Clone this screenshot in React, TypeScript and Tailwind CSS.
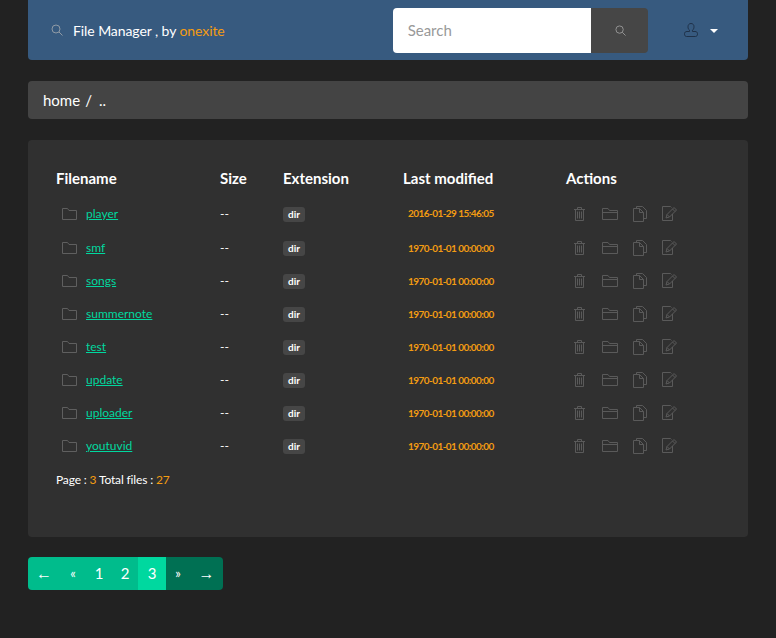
import React from "react";

const files = [
  { name: "player", modified: "2016-01-29 15:46:05" },
  { name: "smf", modified: "1970-01-01 00:00:00" },
  { name: "songs", modified: "1970-01-01 00:00:00" },
  { name: "summernote", modified: "1970-01-01 00:00:00" },
  { name: "test", modified: "1970-01-01 00:00:00" },
  { name: "update", modified: "1970-01-01 00:00:00" },
  { name: "uploader", modified: "1970-01-01 00:00:00" },
  { name: "youtuvid", modified: "1970-01-01 00:00:00" },
];

const columns = "grid grid-cols-[164px_63px_120px_163px_1fr]";

function Magnifier({ className }: { className: string }) {
  return (
    <svg viewBox="0 0 12 12" fill="none" stroke="currentColor" strokeWidth="1" className={className}>
      <circle cx="5" cy="5" r="4" />
      <path d="M8 8l3.5 3.5" />
    </svg>
  );
}

function FolderIcon({ className }: { className: string }) {
  return (
    <svg viewBox="0 0 15 12" fill="none" stroke="currentColor" strokeWidth="1" className={className}>
      <path d="M.5 11.500V.5h5l1.500 2h7.500v9z" />
    </svg>
  );
}

function ActionFolder() {
  return (
    <svg viewBox="0 0 16 12" fill="none" stroke="currentColor" strokeWidth="1" className="w-4 h-3">
      <path d="M.5 11.5V.5h5.5l1.5 2h8v9z" />
      <path d="M.5 4.5h15" />
    </svg>
  );
}

function TrashIcon() {
  return (
    <svg viewBox="0 0 11 14" fill="none" stroke="currentColor" strokeWidth="1" className="w-[11px] h-[14px]">
      <path d="M0 2.5h11M3.5 2.5v-2h4v2M1.5 2.5v11h8v-11M3.500 4.5v7M5.500 4.5v7M7.500 4.5v7" />
    </svg>
  );
}

function CopyIcon() {
  return (
    <svg viewBox="0 0 14 16" fill="none" stroke="currentColor" strokeWidth="1" className="w-[14px] h-4">
      <path d="M3.5 2.5V.5h6l4 4v8h-3" />
      <path d="M.5 2.5h6l4 4v9h-10z" />
      <path d="M6.5 2.5v4h4" />
    </svg>
  );
}

function EditIcon() {
  return (
    <svg viewBox="0 0 15 15" fill="none" stroke="currentColor" strokeWidth="1" className="w-[15px] h-[15px]">
      <path d="M10.5 8v6.500h-10V.5h8l1 1" />
      <path d="M4 12l1-3.500 7-7 2.500 2.500-7 7z" />
      <path d="M5 8.500l2.500 2.500M10.500 3l2.500 2.500" />
    </svg>
  );
}

function UserIcon() {
  return (
    <svg viewBox="0 0 14 14" fill="none" stroke="currentColor" strokeWidth="1" className="w-[14px] h-[14px]">
      <path d="M7 .5c-2 0-3 1.500-3 3.300 0 1.500.6 2.700 1.500 3.400v1.300H3c-1.500 0-2.500.8-2.500 2.200v.5c0 1.300.8 2.300 2 2.300h9c1.200 0 2-1 2-2.300v-.5c0-1.400-1-2.200-2.500-2.200H8.500V7.200C9.400 6.500 10 5.300 10 3.800 10 2 9 .5 7 .5z" />
    </svg>
  );
}

function Row({ name, modified }: { name: string; modified: string }) {
  return (
    <div className={`${columns} group h-[33px] items-center text-[12px] first:h-[34px] first:pb-[1px]`}>
      <div className="flex items-center pl-[6px]">
        <FolderIcon className="w-[15px] h-[12px] text-[#5f5f5f]" />
        <a className="ml-[9px] text-[#00d89f] underline">{name}</a>
      </div>
      <div className="text-white">--</div>
      <div className="mt-[1px] flex">
        <span className="rounded-[3px] bg-[#464646] px-[5px] text-[10px] leading-[15px] font-bold text-white">dir</span>
      </div>
      <div className="mt-[2px] pl-[5px] text-[10px] font-bold tracking-[-0.55px] text-[#f39c12] group-first:mt-0">{modified}</div>
      <div className="flex items-center text-[#5a5a5a]">
        <div className="w-[8px]" />
        <div className="flex w-[28px] items-center"><TrashIcon /></div>
        <div className="flex w-[31px] items-center"><ActionFolder /></div>
        <div className="flex w-[29px] items-center"><CopyIcon /></div>
        <EditIcon />
      </div>
    </div>
  );
}

function PageLink({ children, className }: { children: React.ReactNode; className: string }) {
  return <span className={`flex h-[33px] items-center justify-center text-white ${className}`}>{children}</span>;
}

export default function App() {
  return (
    <div className="min-h-[638px] bg-[#222222] px-[28px] text-white font-['Lato','Liberation_Sans',sans-serif]">
      {/* Navbar */}
      <div className="flex h-[60px] items-center rounded-b-[4px] bg-[#375a7f] pl-[23px]">
        <Magnifier className="w-[12px] h-[12px] text-[#8f9aa5]" />
        <div className="ml-[10px] text-[14px] tracking-[-0.08px]">
          File Manager , by <span className="text-[#f39c12]">onexite</span>
        </div>
        <div className="ml-[168px] flex h-[45px] w-[255px] overflow-hidden rounded-[4px]">
          <div className="flex w-[198px] items-center bg-white pl-[15px] text-[15px] text-[#999999]">Search</div>
          <div className="flex flex-1 items-center justify-center bg-[#464646] pl-[3px]">
            <Magnifier className="w-[11px] h-[11px] text-[#999999]" />
          </div>
        </div>
        <div className="ml-[36px] text-[#1f3148]"><UserIcon /></div>
        <div className="ml-[12px] mt-[2px] h-0 w-0 border-x-4 border-t-4 border-x-transparent border-t-white" />
      </div>

      {/* Breadcrumb */}
      <div className="mt-[21px] flex h-[38px] items-center rounded-[4px] bg-[#444444] pl-[15px] text-[15px]">
        home <span className="mx-[5px]">/</span> <span className="ml-[2px]">..</span>
      </div>

      {/* File list */}
      <div className="mt-[21px] h-[397px] rounded-[4px] bg-[#303030] pl-[28px] pt-[26px]">
        <div className={`${columns} h-[24px] items-center text-[15px] font-bold`}>
          <div>Filename</div>
          <div>Size</div>
          <div>Extension</div>
          <div>Last modified</div>
          <div>Actions</div>
        </div>
        <div className="mt-[7px]">
          {files.map((f) => (
            <Row key={f.name} name={f.name} modified={f.modified} />
          ))}
        </div>
        <div className="mt-[9px] text-[12px] tracking-[-0.15px]">
          Page : <span className="text-[#f39c12]">3</span> Total files : <span className="text-[#f39c12]">27</span>
        </div>
      </div>

      {/* Pagination */}
      <div className="mt-[20px] flex w-fit overflow-hidden rounded-[4px] text-[15px]">
        <PageLink className="w-[32px] bg-[#00bc8c] font-['Liberation_Sans'] text-[16px]">←</PageLink>
        <PageLink className="w-[26px] bg-[#00bc8c] text-[13px]">«</PageLink>
        <PageLink className="w-[26px] bg-[#00bc8c]">1</PageLink>
        <PageLink className="w-[26px] bg-[#00bc8c]">2</PageLink>
        <PageLink className="w-[28px] bg-[#00d89f]">3</PageLink>
        <PageLink className="w-[24px] bg-[#007053] text-[13px]">»</PageLink>
        <PageLink className="w-[33px] bg-[#007053] font-['Liberation_Sans'] text-[16px]">→</PageLink>
      </div>
    </div>
  );
}
